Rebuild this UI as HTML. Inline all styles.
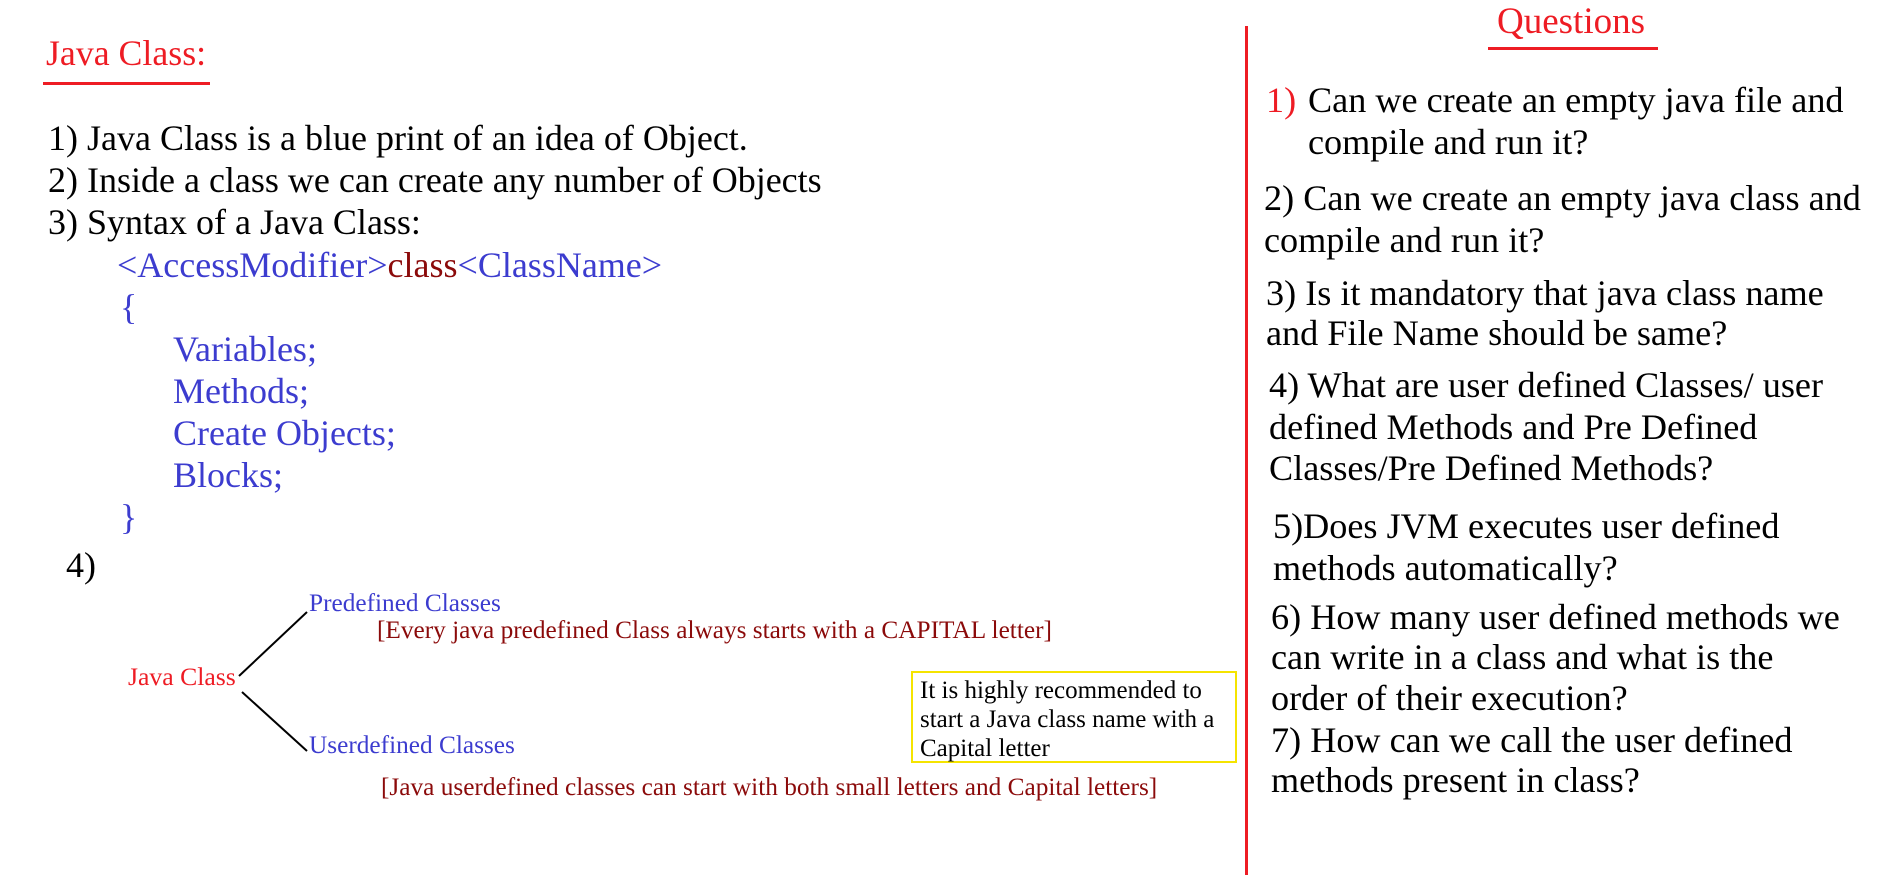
<!DOCTYPE html>
<html><head><meta charset="utf-8"><style>
html,body{margin:0;padding:0;background:#fff;width:1879px;height:895px;overflow:hidden;position:relative;font-family:"Liberation Serif",serif;}
.t{position:absolute;white-space:nowrap;line-height:1;transform-origin:0 0;}
.b{font-size:36px;color:#000;}
.s{font-size:25.3px;}
.bl{color:#3c3ccf;}
.dr{color:#8b0a0a;}
.q{font-size:36.2px;color:#000;}
.r{color:#ee1c24;}
</style></head><body>
<div class="t r" style="left:46px;top:36px;font-size:35.8px;">Java Class:</div>
<div style="position:absolute;left:43px;top:82px;width:167px;height:3px;background:#ee1c24"></div>
<div class="t b" style="left:48px;top:120px;">1) Java Class is a blue print of an idea of Object.</div>
<div class="t b" style="left:48px;top:162px;">2) Inside a class we can create any number of Objects</div>
<div class="t b" style="left:48px;top:204px;">3) Syntax of a Java Class:</div>
<div class="t b bl" style="left:117px;top:247px;">&lt;AccessModifier&gt;<span class="dr">class</span>&lt;ClassName&gt;</div>
<div class="t b bl" style="left:120px;top:289px;">{</div>
<div class="t b bl" style="left:173px;top:331px;">Variables;</div>
<div class="t b bl" style="left:173px;top:373px;">Methods;</div>
<div class="t b bl" style="left:173px;top:415px;">Create Objects;</div>
<div class="t b bl" style="left:173px;top:457px;">Blocks;</div>
<div class="t b bl" style="left:120px;top:499px;">}</div>
<div class="t b" style="left:66px;top:547px;">4)</div>
<div class="t s bl" style="left:309px;top:591px;">Predefined Classes</div>
<div class="t s dr" style="left:377px;top:618px;">[Every java predefined Class always starts with a CAPITAL letter]</div>
<div class="t s r" style="left:128px;top:664px;font-size:25.7px;">Java Class</div>
<div class="t s bl" style="left:309px;top:733px;">Userdefined Classes</div>
<div class="t s dr" style="left:381px;top:775px;">[Java userdefined classes can start with both small letters and Capital letters]</div>
<svg style="position:absolute;left:0;top:0" width="1879" height="895"><line x1="239" y1="676" x2="307" y2="612" stroke="#000" stroke-width="2"/><line x1="242" y1="692" x2="307" y2="751" stroke="#000" stroke-width="2"/></svg>
<div style="position:absolute;left:911px;top:671px;width:322px;height:88px;border:2px solid #f5e400;"></div>
<div class="t" style="left:920px;top:676px;font-size:25px;line-height:29px;">It is highly recommended to<br>start a Java class name with a<br>Capital letter</div>
<div style="position:absolute;left:1245px;top:26px;width:3px;height:849px;background:#ee1c24"></div>
<div class="t r" style="left:1497px;top:3px;font-size:37px;">Questions</div>
<div style="position:absolute;left:1488px;top:47px;width:170px;height:3px;background:#ee1c24"></div>
<div class="t q" style="left:1266px;top:82px;color:#ee1c24;">1)</div>
<div class="t q" style="left:1308px;top:82px;">Can we create an empty java file and</div>
<div class="t q" style="left:1308px;top:124px;">compile and run it?</div>
<div class="t q" style="left:1264px;top:180px;">2) Can we create an empty java class and</div>
<div class="t q" style="left:1264px;top:222px;">compile and run it?</div>
<div class="t q" style="left:1266px;top:275px;">3) Is it mandatory that java class name</div>
<div class="t q" style="left:1266px;top:315px;">and File Name should be same?</div>
<div class="t q" style="left:1269px;top:367px;">4) What are user defined Classes/ user</div>
<div class="t q" style="left:1269px;top:409px;">defined Methods and Pre Defined</div>
<div class="t q" style="left:1269px;top:450px;">Classes/Pre Defined Methods?</div>
<div class="t q" style="left:1273px;top:508px;">5)Does JVM executes user defined</div>
<div class="t q" style="left:1273px;top:550px;">methods automatically?</div>
<div class="t q" style="left:1271px;top:599px;">6) How many user defined methods we</div>
<div class="t q" style="left:1271px;top:639px;">can write in a class and what is the</div>
<div class="t q" style="left:1271px;top:680px;">order of their execution?</div>
<div class="t q" style="left:1271px;top:722px;">7) How can we call the user defined</div>
<div class="t q" style="left:1271px;top:762px;">methods present in class?</div>
</body></html>
